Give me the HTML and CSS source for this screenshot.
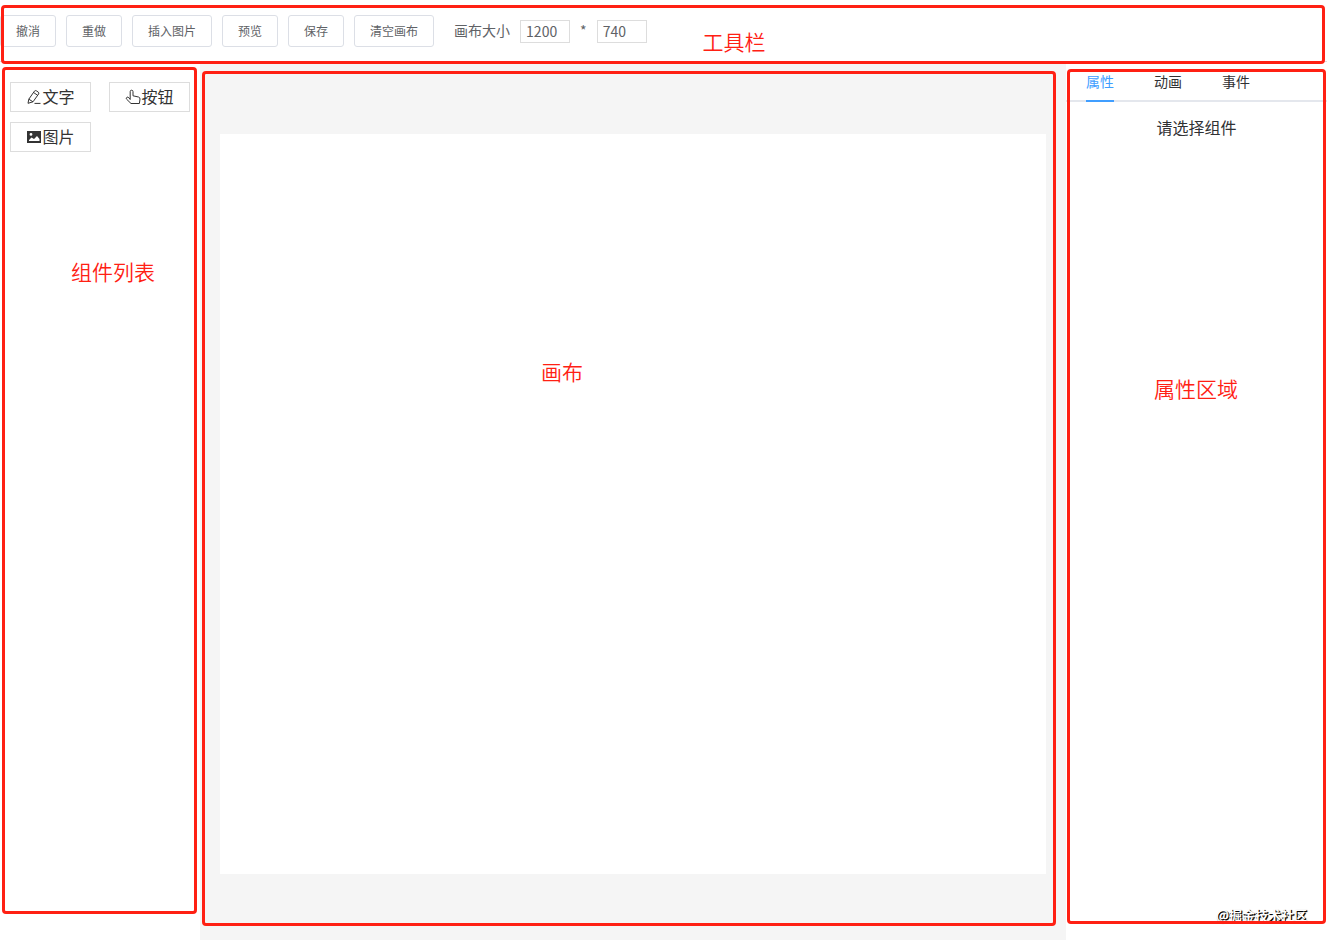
FILE: index.html
```
<!DOCTYPE html>
<html lang="zh-CN">
  <head>
    <title>可视化编辑器</title>
    <meta charset="utf-8" />
    <meta name="viewport" content="width=device-width, initial-scale=1.0" />

    <link rel="stylesheet" href="styles.css">
  </head>
  <body>
    <header class="toolbar">
      <button type="button">撤消</button>
      <button type="button">重做</button>
      <button type="button">插入图片</button>
      <button type="button">预览</button>
      <button type="button">保存</button>
      <button type="button">清空画布</button>

      <div class="canvas-config">
        <label for="canvas-width">画布大小</label>
        <input id="canvas-width" type="text" value="1200" />
        <span>*</span>
        <input type="text" value="740" aria-label="画布高度" />
      </div>

      <div class="frame"><span class="note">工具栏</span></div>
    </header>

    <main>
      <section class="left">
        <div class="component-list">
          <button type="button">
            <svg viewBox="0 0 16 16" fill="none" stroke="currentColor">
              <path d="M2 14.3 2.8 10.2 8.4 2.2Q9.2 1.2 10.3 1.8L12.4 3.2Q13.3 4 12.6 5L7 12.8ZM7.6 3.5l4 2.8M2.8 10.2 7 12.8M8.5 14.4h6" />
            </svg>文字
          </button>
          <button type="button">
            <svg viewBox="0 0 16 16" fill="none" stroke="currentColor">
              <path d="M5.2 10.5V2.6Q5.2 1.2 6.6 1.2T8 2.6V6.8L13.5 8Q15 8.4 15 10L14.4 14.5H6L1.6 10.2Q.8 9.2 1.8 8.4T3.8 8.7L5.2 10.5" />
            </svg>按钮
          </button>
          <button type="button">
            <svg viewBox="0 0 16 16" fill="currentColor">
              <path fill-rule="evenodd" d="M1 2h14v12H1ZM3 12h10.5V10L11 7 8 10 5.5 8.5 3 11ZM5 4a1.4 1.4 0 1 0 0 2.8A1.4 1.4 0 1 0 5 4Z" />
            </svg>图片
          </button>
        </div>
        <div class="frame"><span class="note">组件列表</span></div>
      </section>

      <section class="center">
        <div class="canvas"></div>
        <div class="frame"><span class="note">画布</span></div>
      </section>

      <section class="right">
        <nav class="tabs">
          <a href="#attr" class="active">属性</a>
          <a href="#animation">动画</a>
          <a href="#event">事件</a>
        </nav>
        <p class="placeholder">请选择组件</p>
        <span class="watermark">@掘金技术社区</span>
        <div class="frame"><span class="note">属性区域</span></div>
      </section>
    </main>
  </body>
</html>
```

FILE: styles.css
```
* {
  box-sizing: border-box;
}

body {
  display: flex;
  flex-direction: column;
  min-height: 100vh;
  margin: 0;
  background: #fff;
  color: #303133;
  font-family: 'Noto Sans CJK SC', sans-serif;
  font-size: 16px;
}

button,
input {
  font-family: inherit;
}

.toolbar {
  position: relative;
  z-index: 1;
  display: flex;
  align-items: center;
  gap: 10px;
  height: 62px;
  border-bottom: 1px solid #ddd;
}

.toolbar button {
  height: 32px;
  padding: 0 15px;
  border: 1px solid #dcdfe6;
  border-radius: 3px;
  background: #fff;
  color: #606266;
  font-size: 12px;
}

.canvas-config {
  display: flex;
  align-items: flex-start;
  gap: 10px;
  margin-left: 10px;
  padding-top: 2px;
  color: #606266;
  font-size: 14px;
  line-height: 20px;
}

.canvas-config input {
  width: 50px;
  height: 23px;
  padding: 0 5px 2px;
  border: 1px solid #ddd;
  color: #606266;
  font-size: 14px;
  line-height: 18px;
}

main {
  display: flex;
  flex: 1;
}

.left {
  position: relative;
  width: 200px;
}

.component-list {
  display: grid;
  grid-template-columns: 81px 81px;
  gap: 10px 18px;
  padding: 20px 10px;
}

.component-list button {
  display: flex;
  align-items: center;
  justify-content: center;
  height: 30px;
  padding: 0 0 2px;
  border: 1px solid #ddd;
  background: #fff;
  color: #333;
  font-size: 16px;
}

.component-list svg {
  width: 16px;
  height: 16px;
  margin-top: 2px;
}

.center {
  position: relative;
  flex: 1;
  padding: 72px 20px 66px;
  background: #f5f5f5;
}

.canvas {
  height: 740px;
  background: #fff;
}

.right {
  position: relative;
  width: 261px;
}

.tabs {
  display: flex;
  gap: 40px;
  height: 40px;
  padding-left: 20px;
  border-bottom: 2px solid #e4e7ed;
  font-size: 14px;
  line-height: 38px;
}

.tabs a {
  height: 40px;
  color: #303133;
  text-decoration: none;
}

.tabs .active {
  border-bottom: 2px solid #409eff;
  color: #409eff;
}

.placeholder {
  margin: 13px 0 0;
  text-align: center;
  line-height: 24px;
}

/* outlines and captions drawn over each region */
.frame {
  position: absolute;
  border: 3px solid #ff2013;
  border-radius: 4px;
  pointer-events: none;
}

.note {
  position: absolute;
  color: #ff2013;
  font-size: 21px;
  font-weight: 350;
  line-height: 30px;
  white-space: nowrap;
}

.toolbar .frame {
  inset: 5px 2px -3px 1px;
}

.toolbar .note {
  top: 18px;
  left: 53%;
}

.left .frame {
  inset: 5px 3px 26px 2px;
}

.left .note {
  top: 186px;
  left: 66px;
}

.center .frame {
  inset: 9px 10px 14px 2px;
}

.center .note {
  top: 282px;
  left: 336px;
}

.right .frame {
  inset: 7px 1px 16px 1px;
}

.right .note {
  top: 301px;
  left: 84px;
}

.watermark {
  position: absolute;
  right: 20px;
  bottom: 15px;
  color: #fff;
  font-size: 13px;
  font-weight: 700;
  line-height: 20px;
  text-shadow: 1px 1px 1px #000, 1px 1px 0 #222;
}
```
